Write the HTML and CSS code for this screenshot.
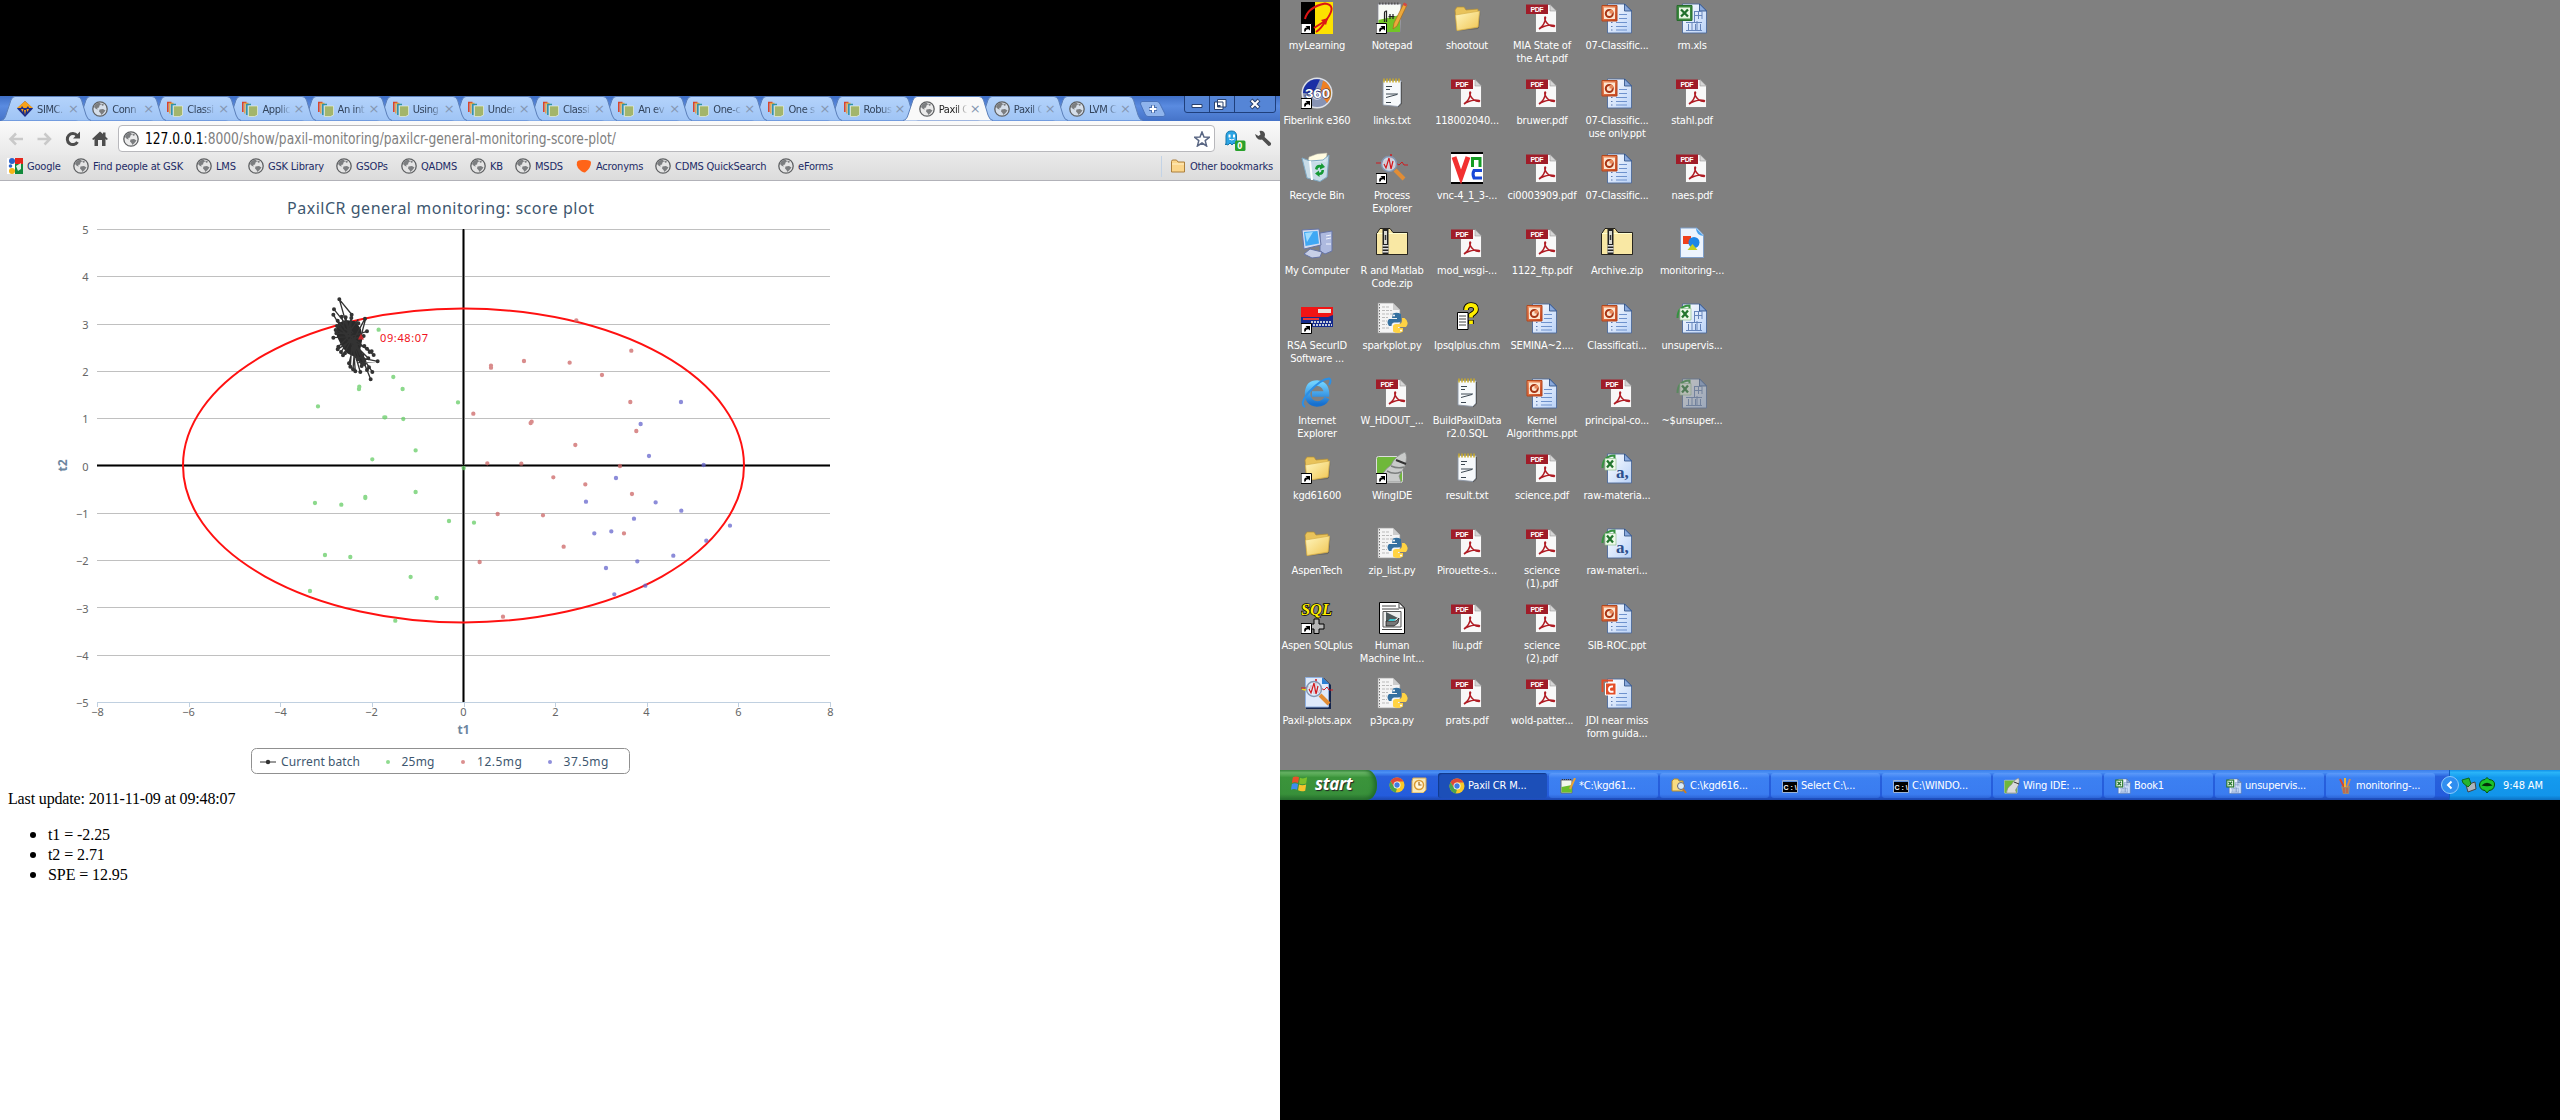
FILE: index.html
```html
<!DOCTYPE html>
<html lang="en">
<head>
<meta charset="utf-8">
<title>Paxil CR Monitoring</title>
<link rel="stylesheet" href="styles.css">
</head>
<body>
<svg class="defs" aria-hidden="true">
  <defs>
    <linearGradient id="gTab" x1="0" y1="0" x2="0" y2="1"><stop offset="0" stop-color="#b4d3fb"/><stop offset="1" stop-color="#9fc4f5"/></linearGradient>
    <linearGradient id="gDoc" x1="0" y1="0" x2="1" y2="1"><stop offset="0" stop-color="#fff"/><stop offset="1" stop-color="#b9d2f8"/></linearGradient>
    <linearGradient id="gFold" x1="0" y1="0" x2="1" y2="1"><stop offset="0" stop-color="#fff7c0"/><stop offset="1" stop-color="#f0c552"/></linearGradient>
    <linearGradient id="gPpt" x1="0" y1="0" x2="1" y2="1"><stop offset="0" stop-color="#f39a6a"/><stop offset="1" stop-color="#c8421a"/></linearGradient>
    <linearGradient id="gIe" x1="0" y1="0" x2="0" y2="1"><stop offset="0" stop-color="#6fd0ff"/><stop offset="1" stop-color="#1670d0"/></linearGradient>
  </defs>
  <symbol id="tabshape" viewBox="0 0 90 25"><path d="M0 24.5C3 24 4 22 5 19L10 4Q11.500 .5 14 .5H76Q79 .5 80.500 4L85 19Q86.500 24 90 24.500"/></symbol>
  <symbol id="globe" viewBox="0 0 16 16"><circle cx="8" cy="8" r="7.200" fill="#e4e4e4" fill-opacity=".75" stroke="#5f6163" stroke-width="1.300"/><path d="M3 3.500Q5 1.500 8 1.800L9 3.500 7.500 4.500 7 6.500 5 7 6 8.500 4 8 2 6zM9.500 2.500L12 3.500 11 5 9.500 4zM7.500 8.500L11 8 13.500 9.500 11.500 12 9.500 14 8.500 12 7 10.500z" fill="#7c7e80"/></symbol>
  <symbol id="books" viewBox="0 0 16 16"><path d="M.8 11V1.500H4.500" fill="none" stroke="#d9452c" stroke-width="1.600"/><path d="M2.800 12.500V2.500H6.500" fill="none" stroke="#e8a23c" stroke-width="1.300"/><path d="M4.800 14V3.500H9" fill="none" stroke="#2f93a6" stroke-width="1.500"/><path d="M6.500 5H15.500V14L12.500 15.500H6.500z" fill="#a3b56b" stroke="#f2f5e2" stroke-width=".6"/></symbol>
  <symbol id="simca" viewBox="0 0 16 16"><path d="M8 0L16 7.500 8 16 0 7.500z" fill="#1a2c86"/><path d="M8 0L16 7H12L11 5 9.500 7H6.500L5 5 4 7H0z" fill="#f6a21a"/><path d="M4 8l1.500 3 1-3zM9.500 8l1 3 1.500-3zM7 9h2l-1 5z" fill="#f6a21a"/></symbol>
  <symbol id="google" viewBox="0 0 16 16"><path d="M0 0H8V16H0z" fill="#fff"/><path d="M8 0H16V6H8z" fill="#e5251c"/><path d="M8 6H16V16H8z" fill="#128a3c"/><path d="M0 9h8v7H0z" fill="#fff"/><circle cx="5" cy="3" r="3" fill="#2a62c9"/><circle cx="3.500" cy="8" r="1.800" fill="#2a62c9"/><circle cx="5" cy="13" r="3" fill="#f5b417"/><path d="M9 8L14 5V11L11 13z" fill="#fff" opacity=".85"/></symbol>
  <symbol id="folder" viewBox="0 0 16 16"><path d="M1.500 14V3.500Q1.500 2 3 2H6.500L8 4H14.500V14z" fill="#fbd58a" stroke="#ab7f3d"/><path d="M2 6H14" stroke="#fff0c8"/></symbol>
  <symbol id="chrome" viewBox="0 0 16 16"><circle cx="8" cy="8" r="7.500" fill="#f6c928"/><path d="M1.500 4.200A7.500 7.500 0 0 1 14.500 4.500H8L5 9.800z" fill="#dc4a38"/><path d="M1.500 4.200L5 9.800 8 11.500 6.800 15.400A7.500 7.500 0 0 1 1.500 4.200z" fill="#4ba44d"/><circle cx="8" cy="8" r="3.500" fill="#fff"/><circle cx="8" cy="8" r="2.700" fill="#3f7de0"/></symbol>
  <symbol id="cut" viewBox="0 0 32 32"><path d="M0 21.500H10.500V31.500H0z" fill="#fff" stroke="#000"/><path d="M3.500 30Q2 25.500 6 25.500L4.500 24H9V28.500L7.500 27.200Q4.500 27 5 29z" fill="#000"/></symbol>
  <symbol id="pdf" viewBox="0 0 32 32"><path d="M9.500 2.500H24L30.500 9V30.500H9.500z" fill="#f8f8f8" stroke="#777" stroke-width=".8"/><path d="M24 2.500V9H30.500z" fill="#d5d5d5" stroke="#888" stroke-width=".5"/><path d="M0 2.500H22V12H0z" fill="#a01c28"/><text x="4.500" y="10" class="pdft" textLength="13">PDF</text><path d="M13 27Q19 23 19.500 15.500Q18.500 14 19 18Q22 24.500 28 24.500Q30 23 24 23Q17 24 13 27z" fill="none" stroke="#b01c24" stroke-width="1.600"/></symbol>
  <symbol id="doc" viewBox="0 0 32 32"><path d="M6.500 2H24L30.500 8.500V31H6.500z" fill="url(#gDoc)" stroke="#4d6a9a" stroke-width=".9"/><path d="M23.500 2L30.500 9H23.500z" fill="#8aa9dc" stroke="#27497f" stroke-width=".8"/></symbol>
  <symbol id="ppt" viewBox="0 0 32 32"><use href="#doc"/><path d="M18 12.500h8M18 16.500h8M15 20.500h11M15 24.500h11M15 28h11" stroke="#6e92cd"/><path d="M10 20.500h1.500M10 24.500h1.500M10 28h1.500" stroke="#5a78b0"/><path d="M1 3.500H16V19H1z" fill="url(#gPpt)" stroke="#b3471c"/><path d="M3 5.500H14V17H3z" fill="#fde5cf"/><circle cx="8.300" cy="11.500" r="3.500" fill="none" stroke="#a63414" stroke-width="2"/><path d="M8.500 11.500V8H12V11.500z" fill="#e8875a"/></symbol>
  <symbol id="ppt2" viewBox="0 0 32 32"><use href="#doc"/><path d="M18 16.500h8M15 20.500h11M15 24.500h11M15 28h11" stroke="#6e92cd"/><path d="M10 20.500h1.500M10 24.500h1.500M10 28h1.500" stroke="#5a78b0"/><path d="M1.500 15V3.500H12" fill="none" stroke="#e34d27" stroke-width="2"/><path d="M4.500 6H15V18H4.500z" fill="#e34d27" stroke="#fff"/><path d="M12 9.500Q8 9 8 12.500 8 15.500 12.500 14.500" fill="none" stroke="#fff" stroke-width="2"/></symbol>
  <symbol id="cells" viewBox="0 0 32 32"><path d="M18 9.500H26M18 13.500H26M10 20.500H26M10 28.500H26M18.500 9V21M22.500 9V17M26 9V17M12.500 22V28M16 20v8M19.500 22v6M21 19v9M24.500 22v6" fill="none" stroke="#6685bb"/></symbol>
  <symbol id="xls" viewBox="0 0 32 32"><use href="#doc"/><use href="#cells"/><path d="M1 3.500H16V18.500H1z" fill="#3d8a3f" stroke="#256b2a"/><path d="M3 5.500H14V16.500H3z" fill="#e8f6e4"/><path d="M5 7.500L12 14.500M12 7.500L5 14.500" stroke="#1f6e2b" stroke-width="2.300"/></symbol>
  <symbol id="xbadge" viewBox="0 0 32 32"><path d="M1.500 16Q1.500 4 13.500 3.500V7" fill="none" stroke="#369140" stroke-width="2"/><path d="M4 6.500H15V18H4z" fill="#eef9ea" stroke="#8fc08f" stroke-width=".7"/><path d="M6 8.500L12 15.500M12 8.500L6 15.500" stroke="#24762f" stroke-width="2.300"/></symbol>
  <symbol id="xlsx" viewBox="0 0 32 32"><use href="#doc"/><use href="#cells"/><use href="#xbadge"/></symbol>
  <symbol id="csv" viewBox="0 0 32 32"><use href="#doc"/><use href="#xbadge"/><text x="15" y="26" class="csvt">a,</text></symbol>
  <symbol id="fold" viewBox="0 0 32 32"><path d="M6 29L28 26 29.500 9 27 27z" fill="#4c4a3c" opacity=".6"/><path d="M4 8L6 5H13L15 8L27 7V25L6 28.500z" fill="#e9c35a" stroke="#b08d35" stroke-width=".7"/><path d="M4.500 13L28.500 9 27 25 6 28.500z" fill="url(#gFold)" stroke="#d7b04a" stroke-width=".7"/></symbol>
  <symbol id="txt" viewBox="0 0 32 32"><path d="M7 3.500H25V26L22 29.500 7 28z" fill="#f6f9fb" stroke="#8b95a5" stroke-width=".9"/><path d="M25.500 5V27L22 30" fill="none" stroke="#555"/><path d="M8 1.500v4M11 1.500v4M14 1.500v4M17 1.500v4M20 1.500v4M23 1.500v4" stroke="#c9ab2a" stroke-width="1.500"/><path d="M10 9.500h6M10 12.500h4M10 17h12M10 20.500l11-3M10 25.500h5" stroke="#3c4852"/></symbol>
  <symbol id="zip" viewBox="0 0 32 32"><path d="M.5 27.500V7L4 1.500H14L17 5.500H31.500V27.500z" fill="#f9e8a4" stroke="#000" stroke-width=".8"/><path d="M1 6.500H31" stroke="#ffffd0"/><path d="M9.500 2V27" stroke="#222" stroke-width="6"/><path d="M9.500 18V27" stroke="#ddd" stroke-width="6" stroke-dasharray="1.500 1.500"/><path d="M9.500 4v13" stroke="#d8d8d0" stroke-width="3"/><path d="M9.500 8v5" stroke="#333" stroke-width="1.500"/></symbol>
  <symbol id="py" viewBox="0 0 32 32"><path d="M2 1H17L24 8V31H2z" fill="#f4f4f4" stroke="#999" stroke-width=".7"/><path d="M17 1V8H24z" fill="#ccc"/><path d="M3.500 2V30" stroke="#777" stroke-dasharray="1.500 1.500"/><path d="M6 5H14M6 8.500H16M6 12H20M6 15.500H12M6 19H11M6 22.500H11M6 26H13" stroke="#bbb" stroke-dasharray="3 1"/><path d="M17 11.500Q21 10 25 12V18Q25 20.500 22 20.500H18Q15.500 21 15.500 24H13Q10 20 13 17H21V16H16z" fill="#35709f"/><path d="M26 16H28.500Q34 20 30 25H22V26H27V29.500Q22 32.500 17 29.500V24.500Q17 22 20 22H24Q26.500 21 26 16z" fill="#ffd343"/><circle cx="18" cy="13.500" r="1" fill="#fff"/><circle cx="25" cy="28.500" r="1" fill="#fff"/></symbol>
  <symbol id="learn" viewBox="0 0 32 32"><path d="M0 0H14V32H0z" fill="#000"/><path d="M14 0H32V32H14z" fill="#fce100"/><path d="M4 17Q7 5 24 1.500Q36 3 26 17Q20 27 15 30M24 19L13 26" fill="none" stroke="#dc1414" stroke-width="2"/><path d="M20 18L27 16 25 23z" fill="#dc1414"/><use href="#cut"/></symbol>
  <symbol id="npp" viewBox="0 0 32 32"><path d="M2 2H25L24 30H2z" fill="#f8fbf6" stroke="#889" stroke-width=".7"/><path d="M2.500 18L24 13V30H2.500z" fill="#72c526"/><path d="M3 1.500H24" stroke="#555" stroke-width="2" stroke-dasharray="1.500 1.500"/><path d="M8.500 20V11q0-2 2-2V20M12.500 14.500h6M14 12v5M17 12v5" fill="none" stroke="#222" stroke-width="1.200"/><path d="M28 1L31 3 21 24 17 27 18 21z" fill="#eda93b" stroke="#a86a1c" stroke-width=".7"/><path d="M28 .5L31 2 30 4.500 27 3z" fill="#d14747"/><use href="#cut"/></symbol>
  <symbol id="f360" viewBox="0 0 32 32"><circle cx="16" cy="16" r="15.500" fill="#dfe2e8"/><circle cx="16" cy="16" r="14" fill="#8793b4"/><path d="M19 2.500A14 14 0 0 0 2 16L12 17z" fill="#1a2fa5"/><path d="M22 3.500A14 14 0 0 1 26 26L19 16z" fill="#f08021"/><circle cx="16" cy="18" r="5" fill="#c9d0e2"/><text x="4" y="20.500" class="t360" textLength="25" lengthAdjust="spacingAndGlyphs">360</text><use href="#cut"/></symbol>
  <symbol id="bin" viewBox="0 0 32 32"><path d="M8 5L16 2 26 1 25 10H7z" fill="#fffbe0" stroke="#bba" stroke-width=".5"/><path d="M1 6L9 9 22 8 28 3 26 25 19 29.500 6 26z" fill="#cfe6f3" fill-opacity=".9" stroke="#7fa9c4"/><path d="M9 9L11 28" stroke="#fff" stroke-width="2"/><path d="M14 17Q15 12 20 13L20.500 11 24 15 19 17.500V15.500Q16.500 15 16.500 18zM23 18Q23 23 18.500 23V25L14 21.500 18 18.500V20.500Q20.500 21 20.500 18z" fill="#159a34"/></symbol>
  <symbol id="lens" viewBox="0 0 32 32"><path d="M0 11H5L7 9 9 12 10 8 13 17 15 2 17 16 20 11 23 13 26 10 28 13H32" fill="none" stroke="#cf1b20"/><circle cx="13" cy="12" r="7.500" fill="#dff0fc" fill-opacity=".8" stroke="#8497b3" stroke-width="1.500"/><path d="M8 12L10 16 13 6 15 17 17 9" fill="none" stroke="#d3181c" stroke-width="1.200"/><path d="M19 18L28 27" stroke="#e28d35" stroke-width="4"/></symbol>
  <symbol id="procexp" viewBox="0 0 32 32"><use href="#lens"/><use href="#cut"/></symbol>
  <symbol id="vnc" viewBox="0 0 32 32"><path d="M0 0H32V32H0z" fill="#000"/><path d="M0 2H32V30H0z" fill="#fff"/><path d="M3 5L10 25 17 5" fill="none" stroke="#f23030" stroke-width="5"/><path d="M21.500 15V6.500H29V15" fill="none" stroke="#149c24" stroke-width="3"/><path d="M31 18.500H23Q21 22 23 26H31" fill="none" stroke="#1747d8" stroke-width="3"/></symbol>
  <symbol id="comp" viewBox="0 0 32 32"><path d="M19 6L31 4V24L24 27 19 24z" fill="#aebadf" stroke="#6674a5"/><path d="M25 9l5-1M25 12l5-1M25 17h5" stroke="#f1f5ff"/><path d="M1 3L18 2 20 18 3 22z" fill="#d3dcf0" stroke="#6674a5"/><path d="M3 5L16.500 4 18 16.500 4.500 19z" fill="#3fa8f4"/><path d="M4 6L12 5 6 15z" fill="#9fdcff"/><path d="M3 27L9 22 21 25 19 30 11 31z" fill="#c7cfe6" stroke="#6674a5"/></symbol>
  <symbol id="shapes" viewBox="0 0 32 32"><path d="M4.500 1H21L27.500 8V30.500H4.500z" fill="#edf4fd" stroke="#7f9fc9"/><path d="M20 1L27.500 9Q20 8 20 1z" fill="#4ba3ee"/><path d="M7 9H15V17H7z" fill="#f0401c"/><circle cx="18" cy="15.500" r="5.500" fill="#1e86e8"/><path d="M16.500 17L21.500 23H11.500z" fill="#c4cf20"/></symbol>
  <symbol id="rsa" viewBox="0 0 32 32"><path d="M0 5H32V25H0z" fill="#142a8c"/><path d="M0 5H32V13L27 15H0z" fill="#f01414"/><path d="M17 7H30V11H17z" fill="#e8e2dc"/><path d="M2 17H18" stroke="#e33" stroke-width="2"/><path d="M10 20H31M12 23H31" stroke="#c6ccd8" stroke-width="2" stroke-dasharray="2 1"/><use href="#cut"/></symbol>
  <symbol id="chm" viewBox="0 0 32 32"><path d="M6.500 10.500H17V27.500H6.500z" fill="#fff" stroke="#000"/><path d="M8 14h7M8 17h7M8 20h7M8 23h7" stroke="#444"/><path d="M15 8Q15 3 20 3 25 3 25 7.500 25 10 20 13V15.500M20 18V22" fill="none" stroke="#000" stroke-width="5.500"/><path d="M15 8Q15 3 20 3 25 3 25 7.500 25 10 20 13V15.500M20 18.500V22" fill="none" stroke="#ffee00" stroke-width="3.800"/></symbol>
  <symbol id="ie" viewBox="0 0 32 32"><path d="M26 21Q23 27 16 27 6.500 26 6.500 16 7.500 6 16 6 25.500 7 25.500 17H11" fill="none" stroke="url(#gIe)" stroke-width="5.500"/><path d="M4 30Q-2 27 8 15 20 2 28 1.500 31 3 28 8" fill="none" stroke="#2b8fe6" stroke-width="2"/></symbol>
  <symbol id="foldcut" viewBox="0 0 32 32"><use href="#fold"/><use href="#cut"/></symbol>
  <symbol id="wing" viewBox="0 0 32 32"><rect x=".5" y="4.500" width="26" height="26" rx="2" fill="#6fb83a" stroke="#ddd"/><path d="M5 30Q5 20 15 13Q19 4 29 0Q32 4 29 14L23 24 25 30z" fill="#c9cbca" stroke="#8a8d8c" stroke-width=".8"/><path d="M15 14Q22 17 28 15M11 19Q18 23 25 20" fill="none" stroke="#7c7f7e" stroke-width="1.500"/><path d="M20 8L30 12" stroke="#333" stroke-width="2"/><use href="#cut"/></symbol>
  <symbol id="sql" viewBox="0 0 32 32"><text x="0" y="13" class="sqlt" textLength="31" lengthAdjust="spacingAndGlyphs">SQL</text><path d="M13 17H18V22H23V27H18V31.500H13V27H10V22H13z" fill="#b5b5b5" stroke="#000"/><use href="#cut"/></symbol>
  <symbol id="scan" viewBox="0 0 32 32"><path d="M3.500 .5H23L28.500 6V31.500H3.500z" fill="#fff" stroke="#000"/><path d="M23 0V6H29M6 4h14M6 7h17M6 27.500h20" fill="none" stroke="#444"/><path d="M7 9.500H25V25H7z" fill="#eee" stroke="#555"/><path d="M10 10L22 16 10 21z" fill="#505a5c"/><path d="M10 19H20L23 16 22 21 18 24H10z" fill="#777" stroke="#111" stroke-width=".7"/><path d="M14 17h6l-2 2h-6z" fill="#3cc7d3"/></symbol>
  <symbol id="apx" viewBox="0 0 32 32"><path d="M5 1H23L30 8V32H5z" fill="#14254d"/><path d="M4.500 .5H21L27.500 7V30H4.500z" fill="#dfeafb" stroke="#8fb0e0"/><path d="M21 .5V7H28z" fill="#2a7fd4"/><path d="M1 12L4 13 6 12" fill="none" stroke="#e8d820" stroke-width="1.500"/><use href="#lens"/></symbol>
  <symbol id="outlook" viewBox="0 0 16 16"><path d="M2 1H15V13L12 16H1V4z" fill="#f8e9b9" stroke="#d6a84e"/><circle cx="8" cy="8" r="4.500" fill="#fff6da" stroke="#db9a33" stroke-width="1.500"/><path d="M8 5V8H10.500" fill="none" stroke="#a86a1a" stroke-width="1.200"/></symbol>
  <symbol id="edit" viewBox="0 0 16 16"><path d="M1 2H12V15H1z" fill="#f2f8ec" stroke="#667"/><path d="M1.500 9L12 7V14.500H1.500z" fill="#6cbd2d"/><path d="M2 1.500h10" stroke="#333" stroke-dasharray="1 1"/><path d="M15 0L10 11" stroke="#e7a43a" stroke-width="2"/></symbol>
  <symbol id="search" viewBox="0 0 16 16"><path d="M1 13V3L3 1H7L8 3H12V13z" fill="#f8dc82" stroke="#b58c2d"/><circle cx="10" cy="8" r="3.500" fill="#d9ecfa" stroke="#667"/><path d="M12 11L15 15" stroke="#c77a24" stroke-width="2"/></symbol>
  <symbol id="cmd" viewBox="0 0 16 16"><path d="M.5 2.500H15.500V14.500H.5z" fill="#000" stroke="#9bb3d6"/><path d="M1 3.500H15" stroke="#5b8fdc"/><text x="1.500" y="11.500" class="cmdt" textLength="13">C:\</text></symbol>
  <symbol id="brush" viewBox="0 0 16 16"><path d="M4 8H13L12 16H6z" fill="#9c8a74"/><path d="M3 1L7 9" stroke="#d9482b" stroke-width="2"/><path d="M8 0V9" stroke="#e9b73a" stroke-width="2"/><path d="M13 1L10 9" stroke="#d98a4d" stroke-width="2"/><path d="M7 10v5M10 10v5" stroke="#e04a2a"/></symbol>
</svg>

<main class="screens">
  <section class="browser">
    <div class="strip">
      <div class="tabs">
        <div class="tab"><svg class="shape"><use href="#tabshape"/></svg><svg class="i16"><use href="#simca"/></svg><span>SIMC.</span><b>×</b></div>
        <div class="tab"><svg class="shape"><use href="#tabshape"/></svg><svg class="i16"><use href="#globe"/></svg><span>Conn</span><b>×</b></div>
        <div class="tab"><svg class="shape"><use href="#tabshape"/></svg><svg class="i16"><use href="#books"/></svg><span>Classi</span><b>×</b></div>
        <div class="tab"><svg class="shape"><use href="#tabshape"/></svg><svg class="i16"><use href="#books"/></svg><span>Applic</span><b>×</b></div>
        <div class="tab"><svg class="shape"><use href="#tabshape"/></svg><svg class="i16"><use href="#books"/></svg><span>An int</span><b>×</b></div>
        <div class="tab"><svg class="shape"><use href="#tabshape"/></svg><svg class="i16"><use href="#books"/></svg><span>Using</span><b>×</b></div>
        <div class="tab"><svg class="shape"><use href="#tabshape"/></svg><svg class="i16"><use href="#books"/></svg><span>Under</span><b>×</b></div>
        <div class="tab"><svg class="shape"><use href="#tabshape"/></svg><svg class="i16"><use href="#books"/></svg><span>Classi</span><b>×</b></div>
        <div class="tab"><svg class="shape"><use href="#tabshape"/></svg><svg class="i16"><use href="#books"/></svg><span>An ev</span><b>×</b></div>
        <div class="tab"><svg class="shape"><use href="#tabshape"/></svg><svg class="i16"><use href="#books"/></svg><span>One-c</span><b>×</b></div>
        <div class="tab"><svg class="shape"><use href="#tabshape"/></svg><svg class="i16"><use href="#books"/></svg><span>One s</span><b>×</b></div>
        <div class="tab"><svg class="shape"><use href="#tabshape"/></svg><svg class="i16"><use href="#books"/></svg><span>Robus</span><b>×</b></div>
        <div class="tab active"><svg class="shape"><use href="#tabshape"/></svg><svg class="i16"><use href="#globe"/></svg><span>Paxil C</span><b>×</b></div>
        <div class="tab"><svg class="shape"><use href="#tabshape"/></svg><svg class="i16"><use href="#globe"/></svg><span>Paxil C</span><b>×</b></div>
        <div class="tab"><svg class="shape"><use href="#tabshape"/></svg><svg class="i16"><use href="#globe"/></svg><span>LVM C</span><b>×</b></div>
      </div>
      <svg class="newtab" viewBox="0 0 26 16"><path d="M2 .5H17Q19 .5 20 3L25 13Q25.500 15.500 23 15.500H8Q6 15.500 5 13L.5 3Q.5 .5 2 .5z" fill="#8fb4ec" stroke="#4a73bb"/><path d="M13 4V12M9 8H17" stroke="#4a6fae" stroke-width="4"/><path d="M13 4.500V11.500M9.500 8H16.500" stroke="#fff" stroke-width="2"/></svg>
      <svg class="winbtns" viewBox="0 0 92 17"><path d="M.5 0V14Q.5 16.500 3 16.500H89Q91.500 16.500 91.500 14V0M25.500 0V16M50.500 0V16" fill="#5585d6" stroke="#1f3f7c"/><path d="M8 8.500H18V11.500H8z" fill="#fff" stroke="#29406c"/><path d="M33.500 3.500H42V11H33.500zM30.500 6H39V13.500H30.500z" fill="#fff" stroke="#29406c"/><path d="M33 9H36.500V11H33z" fill="#29406c"/><path d="M67 4L75 12M75 4L67 12" stroke="#29406c" stroke-width="4"/><path d="M67.500 4.500L74.500 11.500M74.500 4.500L67.500 11.500" stroke="#fff" stroke-width="2"/></svg>
    </div>
    <div class="toolbar">
      <svg class="nav" viewBox="0 0 110 20"><g fill="none" stroke="#c9c9c9" stroke-width="2.500"><path d="M15 10H3M8 4.500L2.500 10 8 15.500"/><path d="M29.500 10H42M36.500 4.500L42 10 36.500 15.500"/></g><path d="M69 6.500A5.500 5.500 0 1 0 69.500 13" fill="none" stroke="#4d4d4d" stroke-width="3"/><path d="M72 2.500V9.500H65z" fill="#4d4d4d"/><path transform="translate(-8 0)" d="M92 10L100 2.500 103 5V3.500H105.500V7.500L108 10 106.500 11 105.500 10V17H102V11H98V17H94.500V10L93.500 11z" fill="#4d4d4d"/></svg>
      <div class="omni"><svg class="i16"><use href="#globe"/></svg><svg class="url" viewBox="0 0 480 22"><text x="0" y="16" textLength="471" lengthAdjust="spacingAndGlyphs"><tspan class="host">127.0.0.1</tspan>:8000/show/paxil-monitoring/paxilcr-general-monitoring-score-plot/</text></svg>
        <svg class="i16 star" viewBox="0 0 16 16"><path d="M8 1L10 6 15.300 6.300 11.200 9.600 12.600 15 8 12 3.400 15 4.800 9.600 .7 6.300 6 6z" fill="#fff" stroke="#5a6784" stroke-width="1.500"/></svg></div>
      <svg class="ghost" viewBox="0 0 22 22"><path d="M2 15V6Q2 1 7.500 1 12.500 1 12.500 6V15L10 13 8 15 6 13 4 15 1 14z" fill="#2ba4e4" stroke="#1778ac"/><path d="M4.500 4.500h2v3h-2zM9 4.500h2v3H9z" fill="#fff"/><path d="M5 9Q8 11 10.500 9" fill="none" stroke="#fff"/><rect x="11" y="10.500" width="10.500" height="10.500" rx="1.500" fill="#29a12c"/><text x="13.300" y="19" class="badge">0</text></svg>
      <svg class="wrench" viewBox="0 0 18 18"><path d="M1 4L4.500 6 6.500 4.500 5.500 1Q9.500 0 11 4Q11 6 10.500 7L17 13Q17.500 16 14.500 16L8 9.500Q3 11 1 4z" fill="#4f4f4f"/></svg>
    </div>
    <nav class="marks">
      <a><svg class="i16"><use href="#google"/></svg>Google</a>
      <a><svg class="i16"><use href="#globe"/></svg>Find people at GSK</a>
      <a><svg class="i16"><use href="#globe"/></svg>LMS</a>
      <a><svg class="i16"><use href="#globe"/></svg>GSK Library</a>
      <a><svg class="i16"><use href="#globe"/></svg>GSOPs</a>
      <a><svg class="i16"><use href="#globe"/></svg>QADMS</a>
      <a><svg class="i16"><use href="#globe"/></svg>KB</a>
      <a><svg class="i16"><use href="#globe"/></svg>MSDS</a>
      <a><svg class="i16" viewBox="0 0 16 16"><path d="M1 4Q2 1.500 8 2 15 1.500 15 4.500 15 10 9 14.500 6 14.500 2 10 0 7.500 1 4z" fill="#ff6418"/></svg>Acronyms</a>
      <a><svg class="i16"><use href="#globe"/></svg>CDMS QuickSearch</a>
      <a><svg class="i16"><use href="#globe"/></svg>eForms</a>
      <a class="other"><svg class="i16"><use href="#folder"/></svg>Other bookmarks</a>
    </nav>
    <article class="page">
      <svg class="chart" viewBox="0 181 880 600">
        <text x="287" y="214" class="title" textLength="307">PaxilCR general monitoring: score plot</text>
        <path class="grid" d="M97 229.500H830M97 276.500H830M97 324.500H830M97 371.500H830M97 418.500H830M97 513.500H830M97 560.500H830M97 607.500H830M97 655.500H830"/>
        <path class="axis" d="M97 702.500H830.500M97.500 702V707M189.500 702V707M280.500 702V707M372.500 702V707M464.500 702V707M555.500 702V707M647.500 702V707M738.500 702V707M830.500 702V707"/>
        <path class="zero" d="M97 465.500H830M463.500 229V702"/>
        <path class="zero core" d="M97 465.500H830M463.500 229V702"/>
        <g class="ylab"><text x="88.500" y="234">5</text><text x="88.500" y="281">4</text><text x="88.500" y="329">3</text><text x="88.500" y="376">2</text><text x="88.500" y="423">1</text><text x="88.500" y="471">0</text><text x="88.500" y="518">−1</text><text x="88.500" y="565">−2</text><text x="88.500" y="613">−3</text><text x="88.500" y="660">−4</text><text x="88.500" y="707">−5</text></g>
        <g class="xlab"><text x="97.500" y="716">−8</text><text x="188.500" y="716">−6</text><text x="280.500" y="716">−4</text><text x="371.500" y="716">−2</text><text x="463.500" y="716">0</text><text x="555.500" y="716">2</text><text x="646.500" y="716">4</text><text x="738.500" y="716">6</text><text x="830.500" y="716">8</text></g>
        <text x="463.500" y="734" class="axt">t1</text>
        <text transform="translate(67 465.500) rotate(-90)" class="axt">t2</text>
        <ellipse class="limit" cx="463.500" cy="465.500" rx="280.500" ry="157"/>
        <g class="run" transform="translate(325 290) scale(.3333)">
          <path class="body" d="M42 98L62 90 92 94 108 118 112 148 106 178 124 212 110 224 88 200 66 190 50 168 36 140 34 115z"/>
          <path class="rays" d="M75 140L43 28M85 130L27 58M70 150L25 74M75 130L38 92M75 140L80 74M65 140L79 84M80 160L120 86M105 150L122 86M75 130L62 82M60 120L50 80M75 140L126 124M75 150L116 138M75 140L25 143M80 130L40 170M80 150L38 178M85 140L54 196M75 150L140 184M80 140L146 195M90 200L158 214M100 218L158 214M75 150L130 205M90 150L72 220M80 170L76 230M90 160L84 238M85 170L91 244M80 160L106 246M85 150L126 240M85 160L142 246M90 150L137 268M80 140L118 222M85 160L110 228M75 140L32 120M75 140L36 108M80 130L34 130M80 140L48 186M85 150L132 232M70 130L100 88M79 72L43 28"/>
          <path class="dots" d="M43 28h0M27 58h0M25 74h0M38 92h0M80 74h0M79 84h0M120 86h0M62 82h0M50 80h0M126 124h0M116 138h0M25 143h0M40 170h0M38 178h0M54 196h0M140 184h0M146 195h0M158 214h0M130 205h0M72 220h0M76 230h0M84 238h0M91 244h0M106 246h0M126 240h0M142 246h0M137 268h0M118 222h0M110 228h0M32 120h0M36 108h0M34 130h0M48 186h0M132 232h0M100 100h0M134 186h0M118 168h0M126 176h0M112 196h0M98 208h0M60 190h0"/>
        </g>
        <g class="pts green">
          <path transform="translate(40 185) scale(.3333)" d="M1016 434h0M1060 576h0M1088 612h0M958 605h0M957 612h0M834 664h0M1033 697h0M1036 697h0M1090 702h0M1127 796h0M997 823h0"/>
          <path transform="translate(400 185) scale(.3333)" d="M174 652h0M191 849h0"/>
          <path transform="translate(40 470) scale(.3333)" d="M825 99h0M904 104h0M976 81h0M976 84h0M1127 66h0M855 255h0M931 261h0M1112 321h0M1190 384h0M810 363h0M1066 452h0"/>
          <path transform="translate(400 470) scale(.3333)" d="M147 153h0M222 158h0"/>
        </g>
        <g class="pts red">
          <path transform="translate(400 185) scale(.3333)" d="M529 406h0M694 497h0M273 542h0M273 548h0M372 528h0M509 533h0M606 570h0M691 651h0M220 686h0M395 710h0M392 714h0M709 738h0M526 780h0M262 835h0M364 836h0M660 843h0"/>
          <path transform="translate(400 470) scale(.3333)" d="M460 22h0M556 43h0M696 72h0M293 132h0M429 136h0M672 190h0M491 230h0M239 276h0M309 440h0"/>
        </g>
        <g class="pts blue">
          <path transform="translate(400 185) scale(.3333)" d="M843 651h0M722 717h0M747 813h0M911 840h0"/>
          <path transform="translate(400 470) scale(.3333)" d="M648 24h0M558 95h0M767 97h0M844 122h0M702 146h0M583 190h0M634 184h0M990 167h0M919 212h0M820 257h0M712 274h0M618 294h0M736 347h0M643 373h0"/>
        </g>
        <path d="M361 333.500L364 339.500H358z" fill="#c8282c"/>
        <text x="380" y="342" class="stamp" textLength="48">09:48:07</text>
        <rect x="251.500" y="748.500" width="378" height="25" rx="5" fill="#fff" stroke="#909090"/>
        <path d="M260 762H276" stroke="#999" stroke-width="2"/><circle cx="268" cy="762" r="2.200" fill="#333"/>
        <circle cx="388" cy="762" r="2" fill="#8fdb8f"/><circle cx="463" cy="762" r="2" fill="#db8f8f"/><circle cx="550" cy="762" r="2" fill="#8f8fdb"/>
        <g class="leg"><text x="281" y="766" textLength="79">Current batch</text><text x="401.500" y="766" textLength="33">25mg</text><text x="477" y="766" textLength="45">12.5mg</text><text x="563.500" y="766" textLength="45">37.5mg</text></g>
      </svg>
      <p>Last update: 2011-11-09 at 09:48:07</p>
      <ul><li>t1 = -2.25</li><li>t2 = 2.71</li><li>SPE = 12.95</li></ul>
    </article>
  </section>

  <section class="desktop">
    <ul class="icons">
      <li><svg><use href="#learn"/></svg><span>myLearning</span></li>
      <li><svg><use href="#f360"/></svg><span>Fiberlink e360</span></li>
      <li><svg><use href="#bin"/></svg><span>Recycle Bin</span></li>
      <li><svg><use href="#comp"/></svg><span>My Computer</span></li>
      <li><svg><use href="#rsa"/></svg><span>RSA SecurID<br>Software ...</span></li>
      <li><svg><use href="#ie"/></svg><span>Internet<br>Explorer</span></li>
      <li><svg><use href="#foldcut"/></svg><span>kgd61600</span></li>
      <li><svg><use href="#fold"/></svg><span>AspenTech</span></li>
      <li><svg><use href="#sql"/></svg><span>Aspen SQLplus</span></li>
      <li><svg><use href="#apx"/></svg><span>Paxil-plots.apx</span></li>

      <li><svg><use href="#npp"/></svg><span>Notepad</span></li>
      <li><svg><use href="#txt"/></svg><span>links.txt</span></li>
      <li><svg><use href="#procexp"/></svg><span>Process<br>Explorer</span></li>
      <li><svg><use href="#zip"/></svg><span>R and Matlab<br>Code.zip</span></li>
      <li><svg><use href="#py"/></svg><span>sparkplot.py</span></li>
      <li><svg><use href="#pdf"/></svg><span>W_HDOUT_...</span></li>
      <li><svg><use href="#wing"/></svg><span>WingIDE</span></li>
      <li><svg><use href="#py"/></svg><span>zip_list.py</span></li>
      <li><svg><use href="#scan"/></svg><span>Human<br>Machine Int...</span></li>
      <li><svg><use href="#py"/></svg><span>p3pca.py</span></li>

      <li><svg><use href="#fold"/></svg><span>shootout</span></li>
      <li><svg><use href="#pdf"/></svg><span>118002040...</span></li>
      <li><svg><use href="#vnc"/></svg><span>vnc-4_1_3-...</span></li>
      <li><svg><use href="#pdf"/></svg><span>mod_wsgi-...</span></li>
      <li><svg><use href="#chm"/></svg><span>Ipsqlplus.chm</span></li>
      <li><svg><use href="#txt"/></svg><span>BuildPaxilData<br>r2.0.SQL</span></li>
      <li><svg><use href="#txt"/></svg><span>result.txt</span></li>
      <li><svg><use href="#pdf"/></svg><span>Pirouette-s...</span></li>
      <li><svg><use href="#pdf"/></svg><span>liu.pdf</span></li>
      <li><svg><use href="#pdf"/></svg><span>prats.pdf</span></li>

      <li><svg><use href="#pdf"/></svg><span>MIA State of<br>the Art.pdf</span></li>
      <li><svg><use href="#pdf"/></svg><span>bruwer.pdf</span></li>
      <li><svg><use href="#pdf"/></svg><span>ci0003909.pdf</span></li>
      <li><svg><use href="#pdf"/></svg><span>1122_ftp.pdf</span></li>
      <li><svg><use href="#ppt"/></svg><span>SEMINA~2....</span></li>
      <li><svg><use href="#ppt"/></svg><span>Kernel<br>Algorithms.ppt</span></li>
      <li><svg><use href="#pdf"/></svg><span>science.pdf</span></li>
      <li><svg><use href="#pdf"/></svg><span>science<br>(1).pdf</span></li>
      <li><svg><use href="#pdf"/></svg><span>science<br>(2).pdf</span></li>
      <li><svg><use href="#pdf"/></svg><span>wold-patter...</span></li>

      <li><svg><use href="#ppt"/></svg><span>07-Classific...</span></li>
      <li><svg><use href="#ppt"/></svg><span>07-Classific...<br>use only.ppt</span></li>
      <li><svg><use href="#ppt"/></svg><span>07-Classific...</span></li>
      <li><svg><use href="#zip"/></svg><span>Archive.zip</span></li>
      <li><svg><use href="#ppt"/></svg><span>Classificati...</span></li>
      <li><svg><use href="#pdf"/></svg><span>principal-co...</span></li>
      <li><svg><use href="#csv"/></svg><span>raw-materia...</span></li>
      <li><svg><use href="#csv"/></svg><span>raw-materi...</span></li>
      <li><svg><use href="#ppt"/></svg><span>SIB-ROC.ppt</span></li>
      <li><svg><use href="#ppt2"/></svg><span>JDI near miss<br>form guida...</span></li>

      <li><svg><use href="#xls"/></svg><span>rm.xls</span></li>
      <li><svg><use href="#pdf"/></svg><span>stahl.pdf</span></li>
      <li><svg><use href="#pdf"/></svg><span>naes.pdf</span></li>
      <li><svg><use href="#shapes"/></svg><span>monitoring-...</span></li>
      <li><svg><use href="#xlsx"/></svg><span>unsupervis...</span></li>
      <li class="hid"><svg><use href="#xlsx"/></svg><span>~$unsuper...</span></li>
    </ul>
    <footer class="taskbar">
      <div class="start"><svg viewBox="0 0 20 20"><path d="M3 3Q6 1 9.500 3L8.500 9Q5 7.500 2 9z" fill="#e8502a"/><path d="M10.500 3.500Q14 5 18 3L17 9.500Q13 11 9.500 9.500z" fill="#7cc02c"/><path d="M2 10Q5 8.500 8.500 10L7.500 16Q4 14.500 1 16z" fill="#3c8df0"/><path d="M9.500 10.500Q13 12 17 10.500L16 17Q12 18.500 8.500 16.500z" fill="#f6c32c"/></svg>start</div>
      <div class="quick"><svg class="i16"><use href="#chrome"/></svg><svg class="i16"><use href="#outlook"/></svg></div>
      <div class="tasks">
        <span class="on"><svg class="i16"><use href="#chrome"/></svg>Paxil CR M...</span>
        <span><svg class="i16"><use href="#edit"/></svg>*C:\kgd61...</span>
        <span><svg class="i16"><use href="#search"/></svg>C:\kgd616...</span>
        <span><svg class="i16"><use href="#cmd"/></svg>Select C:\...</span>
        <span><svg class="i16"><use href="#cmd"/></svg>C:\WINDO...</span>
        <span><svg class="i16" viewBox="0 0 32 32"><rect x=".5" y="4.500" width="26" height="26" rx="2" fill="#6fb83a" stroke="#ddd"/><path d="M5 30Q5 20 15 13Q19 4 29 0Q32 4 29 14L23 24 25 30z" fill="#d9dbda" stroke="#777"/><path d="M20 8L30 12" stroke="#333" stroke-width="2"/></svg>Wing IDE: ...</span>
        <span><svg class="i16" viewBox="0 0 32 32"><use href="#xls"/></svg>Book1</span>
        <span><svg class="i16" viewBox="0 0 32 32"><use href="#xls"/></svg>unsupervis...</span>
        <span><svg class="i16"><use href="#brush"/></svg>monitoring-...</span>
      </div>
      <div class="tray">
        <svg class="chev" viewBox="0 0 18 18"><circle cx="9" cy="9" r="8.500" fill="#2f8ef0" stroke="#8cc8fb"/><path d="M10.500 5.500L7 9 10.500 12.500" fill="none" stroke="#fff" stroke-width="2"/></svg>
        <svg class="i16" viewBox="0 0 16 16"><path d="M5 8L14 5 15 12 7 15z" fill="#aab4bd" stroke="#444"/><path d="M1 3L8 1 10 7 7 10 2 6z" fill="#26b52e" stroke="#0f6818"/></svg>
        <svg class="i16" viewBox="0 0 16 16"><path d="M8 .5L10 2.500Q16 3 15.500 8 15 13 10 13.500L8 16 6 13.500Q1 13 .5 8 1 3 6 2.500z" fill="#1bc22a" stroke="#064f0c"/><path d="M2.500 8.500Q8 3 13.500 8.500 8 10 2.500 8.500z" fill="#052b08"/></svg>
        <time>9:48 AM</time>
      </div>
    </footer>
  </section>
</main>
</body>
</html>
```

FILE: styles.css
```css
* { box-sizing: border-box; }
body { margin: 0; background: #000; }
ul { margin: 0; padding: 0; }
svg { display: block; flex: none; }
.defs { position: absolute; width: 0; height: 0; visibility: hidden; }
.screens {
  display: grid; grid-template-columns: 1280px 1280px; align-items: start;
  width: 2560px; height: 1120px; overflow: hidden;
  font: 11px/13px "DejaVu Sans Condensed", "DejaVu Sans", sans-serif;
}
.i16 { width: 16px; height: 16px; }

/* browser window */
.browser { margin-top: 96px; height: 1024px; background: #fff; }
.strip {
  display: flex; height: 25px; position: relative;
  background: linear-gradient(#3f6fc6, #5a8be0 40%, #4573c8);
}
.tabs { display: flex; padding-left: 3px; }
.tab {
  position: relative; width: 75.150px; height: 25px; padding: 1px 0 0 14px;
  display: flex; align-items: center; color: #33445c; letter-spacing: -.4px;
}
.tab .shape { position: absolute; left: -2px; top: 0; width: 90px; height: 25px; fill: url(#gTab); stroke: #5b7fb9; }
.tab > :not(.shape) { position: relative; }
.tab:nth-child(1) { z-index: 15; } .tab:nth-child(2) { z-index: 14; } .tab:nth-child(3) { z-index: 13; }
.tab:nth-child(4) { z-index: 12; } .tab:nth-child(5) { z-index: 11; } .tab:nth-child(6) { z-index: 10; }
.tab:nth-child(7) { z-index: 9; } .tab:nth-child(8) { z-index: 8; } .tab:nth-child(9) { z-index: 7; }
.tab:nth-child(10) { z-index: 6; } .tab:nth-child(11) { z-index: 5; } .tab:nth-child(12) { z-index: 4; }
.tab:nth-child(14) { z-index: 2; } .tab:nth-child(15) { z-index: 1; }
.tab.active { z-index: 20; color: #222; }
.tab.active .shape { fill: #f9f9f9; }
.tab span {
  width: 31px; margin-left: 4px; white-space: nowrap; flex: none;
  -webkit-mask-image: linear-gradient(90deg, #000 55%, transparent 92%);
  mask-image: linear-gradient(90deg, #000 55%, transparent 92%);
}
.tab b { margin: 0 0 1px; font: 13px/13px "DejaVu Sans", sans-serif; color: #8596b0; }
.newtab { width: 26px; height: 16px; margin: 5px 0 0 10px; }
.winbtns { width: 92px; height: 17px; margin-left: auto; margin-right: 4px; }
.toolbar {
  display: flex; height: 34px; padding: 4px 0 0 8px;
  background: linear-gradient(#fafafa, #e9e9e9);
}
.nav { width: 110px; height: 20px; margin: 4px 0 0; }
.omni {
  display: flex; align-items: center; width: 1097px; height: 27px; padding: 0 4px;
  border: 1px solid #b8b8bc; border-radius: 4px; background: #fff;
}
.url { width: 480px; height: 22px; margin-left: 6px; font-size: 15px; fill: #808080; }
.host { fill: #000; }
.star { margin-left: auto; }
.ghost { width: 22px; height: 22px; margin: 5px 0 0 9px; }
.wrench { width: 18px; height: 18px; margin: 5px 0 0 8px; }
.badge { font: bold 8px "DejaVu Sans Condensed", sans-serif; fill: #fff; }
.marks {
  display: grid; align-items: center; height: 26px; padding: 0 0 3px 7px;
  grid-template-columns: 66px 123px 52px 88px 65px 69px 45px 61px 79px 123px 383px 119px;
  background: linear-gradient(#e8e8e8, #dcdcdc); border-bottom: 1px solid #b2b2b8;
  color: #1d2b66; letter-spacing: -.2px;
}
.marks a { display: flex; align-items: center; gap: 4px; white-space: nowrap; }
.marks .other { height: 21px; padding-left: 8px; border-left: 1px solid #c3d3e6; }

/* page with the score plot */
.page { font: 16px/20px "Liberation Serif", serif; color: #000; }
.chart { width: 880px; height: 600px; font-family: "Noto Sans", sans-serif; }
.page p { margin: 8px 0 16px 8px; letter-spacing: -.150px; }
.page ul { padding-left: 30px; list-style: none; }
.page li { display: flex; align-items: center; gap: 12px; letter-spacing: -.080px; }
.page li::before { content: ""; width: 6px; height: 6px; border-radius: 3px; background: #000; }
.title { font-size: 16px; fill: #3e576f; }
.grid { stroke: #c0c0c0; fill: none; }
.axis { stroke: #c0d0e0; fill: none; }
.zero { stroke: #777; stroke-width: 3; }
.zero.core { stroke: #000; stroke-width: 1; }
.ylab, .xlab { font-size: 11px; fill: #666; }
.ylab { text-anchor: end; }
.xlab, .axt { text-anchor: middle; }
.axt { font-size: 12px; font-weight: bold; fill: #6d869f; }
.limit { fill: none; stroke: #f11; stroke-width: 2; }
.body { fill: #2a2a2a; }
.rays { fill: none; stroke: #333; stroke-width: 4; }
.dots { stroke: #333; stroke-width: 12; stroke-linecap: round; }
.pts { fill: none; stroke-width: 13; stroke-linecap: round; }
.green { stroke: #66cc66; stroke-opacity: .75; }
.red { stroke: #cc6666; stroke-opacity: .75; }
.blue { stroke: #6666cc; stroke-opacity: .75; }
.stamp { font-size: 11px; fill: #f01020; }
.leg { font-size: 12px; fill: #3e576f; }

/* desktop */
.desktop { display: flex; flex-direction: column; height: 800px; background: #808080; }
.icons {
  flex: 1; display: grid; grid-auto-flow: column; list-style: none; color: #fff;
  grid-template-rows: repeat(10, 75px); grid-auto-columns: 75px; justify-content: start;
}
.icons li { display: flex; flex-direction: column; align-items: center; padding: 2px 1px 0 0; text-align: center; white-space: nowrap; }
.icons svg { width: 32px; height: 32px; }
.icons span { margin-top: 5px; letter-spacing: -.2px; }
.hid svg { opacity: .5; }
.pdft { font: bold 7px "Liberation Sans", sans-serif; fill: #fff; }
.csvt { font: bold 17px "Liberation Serif", serif; fill: #2d4f8c; }
.t360 { font: bold 13px "Liberation Sans", sans-serif; fill: #fff; stroke: #1c2a6c; stroke-width: 1px; paint-order: stroke; }
.sqlt { font: italic bold 16px "Liberation Serif", serif; fill: #ffee00; stroke: #000; stroke-width: 1.500px; paint-order: stroke; }
.cmdt { font: bold 7px "Liberation Sans", sans-serif; fill: #fff; }

/* taskbar */
.taskbar {
  display: flex; height: 30px; color: #fff;
  background: linear-gradient(#3c7ce8, #4a90f4 8%, #2860dc 22%, #245cdc 85%, #1c48b0);
}
.start {
  display: flex; align-items: center; gap: 6px; width: 97px; padding: 0 0 2px 10px;
  border-radius: 0 10px 10px 0 / 0 15px 15px 0;
  background: linear-gradient(#4f9e4f, #6cb868 8%, #3b943b 25%, #38903a 80%, #2a7030);
  box-shadow: inset -3px 0 4px #1f6a2a;
  font: italic bold 17px/20px "Open Sans", sans-serif; letter-spacing: -.4px; text-shadow: 1px 1px 1px #222;
}
.start svg { width: 19px; height: 20px; }
.quick { display: flex; align-items: center; gap: 6px; width: 61px; padding-left: 12px; }
.tasks { display: flex; gap: 2px; padding: 3px 0; }
.tasks span {
  display: flex; align-items: center; gap: 3px; width: 109px; height: 25px; padding-left: 11px;
  border-radius: 3px; background: linear-gradient(#5c9afa, #3c80f2 20%, #3a7cf0 85%, #2e66d8);
  white-space: nowrap; letter-spacing: -.2px;
}
.tasks .on { background: #1c4fb8; box-shadow: inset 1px 1px 1px #123a8c; }
.tray {
  display: flex; align-items: center; gap: 2px; margin-left: auto; width: 111px;
  background: linear-gradient(#1290e8, #2ab4f8 8%, #149aee 25%, #1294ea 85%, #0c72c4);
  border-left: 1px solid #0f5ec0;
}
.chev { width: 18px; height: 18px; margin-left: -9px; }
.tray time { margin-left: 6px; white-space: nowrap; letter-spacing: -.1px; }
```
